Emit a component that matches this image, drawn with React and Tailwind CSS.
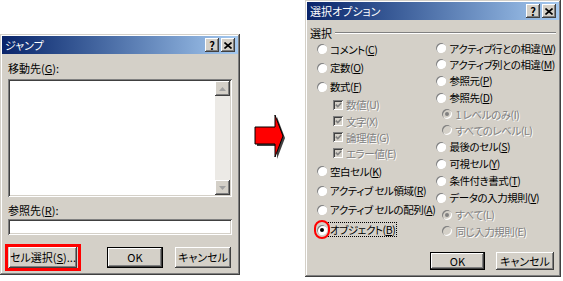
import React from 'react';

// Windows classic look: 3D edges are drawn with inset shadows
const win = 'bg-[#d4d0c8] shadow-[inset_-1px_-1px_#404040,inset_1px_1px_#d4d0c8,inset_-2px_-2px_#808080,inset_2px_2px_#fff]';
const raised = 'bg-[#d4d0c8] shadow-[inset_-1px_-1px_#404040,inset_1px_1px_#fff,inset_-2px_-2px_#808080,inset_2px_2px_#d4d0c8]';
const sunken = 'shadow-[inset_1px_1px_#808080,inset_-1px_-1px_#fff,inset_2px_2px_#404040,inset_-2px_-2px_#d4d0c8]';
const grayText = 'text-[#808080] [text-shadow:1px_1px_0_#fff]';

const col1 = [
    { t: 'コメント', k: 'C', h: 18 },
    { t: '定数', k: 'O', h: 19 },
    { t: '数式', k: 'F', h: 19 },
    { t: '数値', k: 'U', h: 17, cb: true },
    { t: '文字', k: 'X', h: 16, cb: true },
    { t: '論理値', k: 'G', h: 16, cb: true },
    { t: 'エラー値', k: 'E', h: 16, cb: true },
    { t: '空白セル', k: 'K', h: 20 },
    { t: 'アクティブ セル領域', k: 'R', h: 19 },
    { t: 'アクティブ セルの配列', k: 'A', h: 19 },
    { t: 'オブジェクト', k: 'B', h: 21, checked: true, focus: true },
];

const col2 = [
    { t: 'アクティブ行との相違', k: 'W', h: 16 },
    { t: 'アクティブ列との相違', k: 'M', h: 16 },
    { t: '参照元', k: 'P', h: 17 },
    { t: '参照先', k: 'D', h: 17 },
    { t: '1 レベルのみ', k: 'I', h: 16, sub: true, disabled: true, checked: true },
    { t: 'すべてのレベル', k: 'L', h: 16, sub: true, disabled: true },
    { t: '最後のセル', k: 'S', h: 17 },
    { t: '可視セル', k: 'Y', h: 17 },
    { t: '条件付き書式', k: 'T', h: 17 },
    { t: 'データの入力規則', k: 'V', h: 17 },
    { t: 'すべて', k: 'L', h: 17, sub: true, disabled: true, checked: true },
    { t: '同じ入力規則', k: 'E', h: 16, sub: true, disabled: true },
];

const TitleBtn = ({ children, className = '' }) => (
    <div className={`flex h-[14px] w-[14px] items-center justify-center ${raised} ${className}`}>
        {children}
    </div>
);

const TitleBar = ({ title }) => (
    <div className="flex h-[18px] items-center bg-linear-to-r from-[#0a246a] to-[#a6caf0] pl-[3px] pr-[3px]">
        <span className="flex-1 text-[11px] leading-[13px] text-white">{title}</span>
        <TitleBtn>
            <span className="text-[11px] font-bold leading-none text-black">?</span>
        </TitleBtn>
        <TitleBtn className="ml-[2px]">
            <svg width="8" height="7" viewBox="0 0 8 7">
                <path d="M0.5 0.5 L7.5 6.5 M7.5 0.5 L0.5 6.5" stroke="#000" strokeWidth="1.6" />
            </svg>
        </TitleBtn>
    </div>
);

const Button = ({ children, def, className = '' }) => (
    <div className={`flex items-center justify-center ${def ? 'border border-black' : ''} ${className}`}>
        <div className={`flex h-full w-full items-center justify-center ${raised}`}>{children}</div>
    </div>
);

const ScrollBtn = ({ down }) => (
    <div className={`flex h-[15px] w-[15px] items-center justify-center ${raised}`}>
        <svg width="7" height="4" viewBox="0 0 7 4">
            <path d={down ? 'M0 0 H7 L3.5 4 Z' : 'M0 4 H7 L3.5 0 Z'} fill="#a0a0a0" />
        </svg>
    </div>
);

const RadioDot = ({ checked, disabled }) => (
    <div
        className={`flex h-[10px] w-[10px] shrink-0 items-center justify-center rounded-full ${disabled ? 'bg-[#d4d0c8]' : 'bg-white'} shadow-[inset_1px_1px_#808080,inset_-1px_-1px_#fff]`}
    >
        {checked && <div className={`h-[4px] w-[4px] rounded-full ${disabled ? 'bg-[#808080]' : 'bg-black'}`} />}
    </div>
);

const CheckBox = () => (
    <div className={`flex h-[10px] w-[10px] shrink-0 items-center justify-center bg-[#d4d0c8] ${sunken}`}>
        <svg width="7" height="6" viewBox="0 0 7 6">
            <path d="M0.8 2.6 L2.8 4.6 L6.2 1" stroke="#808080" strokeWidth="1.6" fill="none" />
        </svg>
    </div>
);

const Item = ({ it }) => {
    const gray = it.cb || it.disabled;
    return (
        <div className={`flex items-center ${it.cb ? 'pl-[16px]' : it.sub ? 'pl-[6px]' : ''}`} style={{ height: it.h }}>
            {it.cb ? (
                <CheckBox />
            ) : (
                <div className="relative">
                    <RadioDot checked={it.checked} disabled={it.disabled} />
                    {it.focus && (
                        <div className="absolute left-[-3px] top-[-5px] h-[19px] w-[16px] rounded-full border-2 border-[#ff0000]" />
                    )}
                </div>
            )}
            <span
                className={`ml-[2px] whitespace-nowrap px-[1px] ${gray ? grayText : ''} ${it.focus ? 'outline outline-1 outline-dotted outline-black' : ''}`}
            >
                {it.t}(
                {gray ? it.k : <u>{it.k}</u>})
            </span>
        </div>
    );
};

const JumpDialog = () => (
    <div className={`mt-[34px] flex h-[241px] w-[240px] shrink-0 flex-col p-[2px] ${win}`}>
        <TitleBar title="ジャンプ" />
        <div className="flex flex-1 flex-col px-[6px]">
            <div className="mt-[7px] leading-[14px]">
                移動先(<u>G</u>):
            </div>
            <div className={`mt-[4px] flex h-[118px] bg-white p-[2px] ${sunken}`}>
                <div className="flex-1" />
                <div className="flex w-[15px] flex-col bg-[#eceae6]">
                    <ScrollBtn />
                    <div className="flex-1" />
                    <ScrollBtn down />
                </div>
            </div>
            <div className="mt-[6px] leading-[14px]">
                参照先(<u>R</u>):
            </div>
            <div className={`mt-[2px] h-[16px] bg-white ${sunken}`} />
            <div className="mt-[9px] flex items-center">
                <div className="-ml-[3px] border-[3px] border-[#ff0000] px-[1px] py-0">
                    <Button className="h-[21px] w-[68px]">
                        セル選択(<u>S</u>)...
                    </Button>
                </div>
                <Button def className="ml-[26px] h-[21px] w-[56px]">
                    OK
                </Button>
                <Button className="ml-[12px] h-[21px] w-[56px]">キャンセル</Button>
            </div>
        </div>
    </div>
);

const OptionsDialog = () => (
    <div className={`flex h-[277px] w-[256px] shrink-0 flex-col p-[2px] ${win}`}>
        <TitleBar title="選択オプション" />
        <div className="flex flex-1 flex-col px-[3px]">
            <div className="mt-[7px] flex h-[12px] items-center">
                <span>選択</span>
                <div className="ml-[3px] h-[2px] flex-1 border-t border-b border-t-[#808080] border-b-white" />
            </div>
            <div className="mt-[1px] flex h-[210px] pl-[7px] text-[10.5px] tracking-[-0.45px]">
                <div className="flex w-[125px] flex-col">
                    {col1.map((it) => (
                        <Item key={it.t} it={it} />
                    ))}
                </div>
                <div className="flex flex-col">
                    {col2.map((it) => (
                        <Item key={it.t} it={it} />
                    ))}
                </div>
            </div>
            <div className="mt-[2px] flex justify-end pr-[2px]">
                <Button def className="h-[18px] w-[55px]">
                    OK
                </Button>
                <Button className="ml-[11px] h-[18px] w-[58px]">キャンセル</Button>
            </div>
        </div>
    </div>
);

const Arrow = () => (
    <svg className="ml-[12px] mt-[113px] shrink-0" width="34" height="47" viewBox="0 0 34 47">
        <polygon points="5,16 25,16 25,4 33,25 25,46 25,33 5,33" fill="#404040" />
        <polygon points="3,14 23,14 23,2 31,23 23,44 23,31 3,31" fill="#ff0000" stroke="#000" strokeWidth="1" />
    </svg>
);

export default function App() {
    return (
        <div className="flex h-[281px] w-[563px] items-start bg-white font-['Noto_Sans_CJK_JP',sans-serif] text-[11px] leading-[13px] text-black [font-feature-settings:'palt']">
            <JumpDialog />
            <Arrow />
            <div className="ml-[19px]">
                <OptionsDialog />
            </div>
        </div>
    );
}
